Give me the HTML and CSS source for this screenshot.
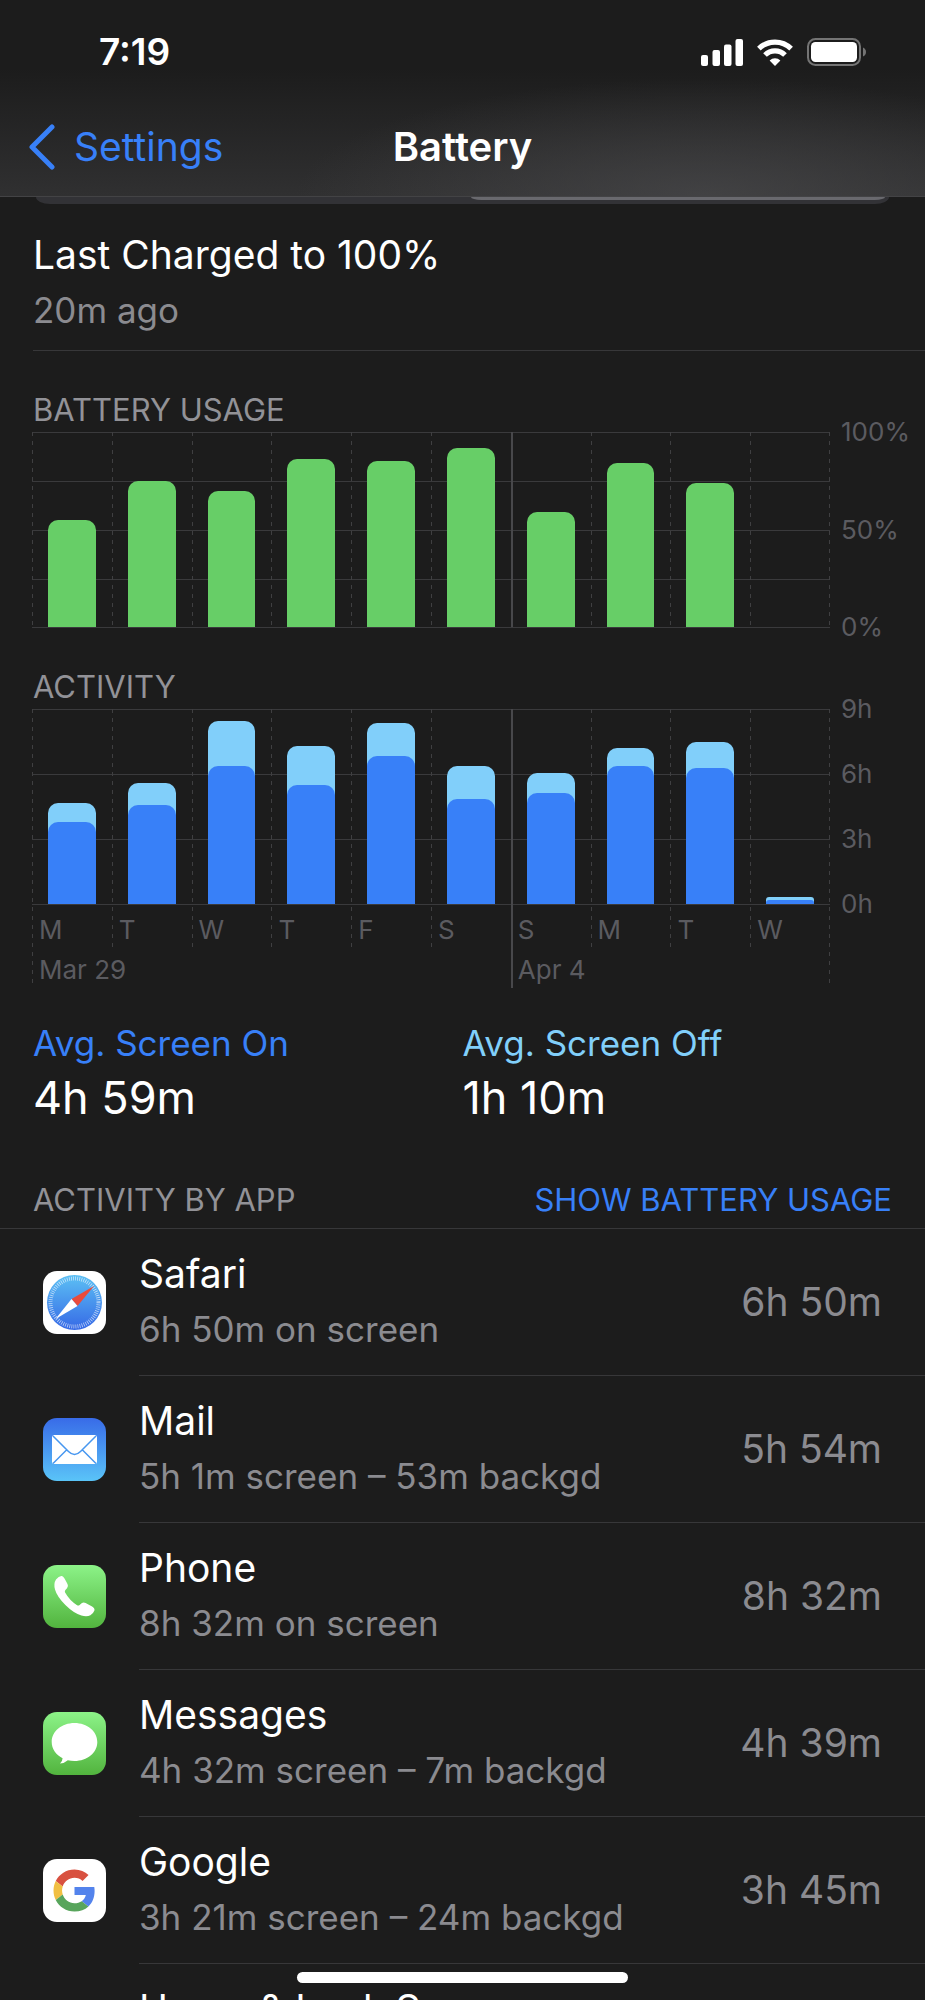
FILE: index.html
```html
<!DOCTYPE html>
<html lang="en">
<head>
<meta charset="utf-8">
<meta name="viewport" content="width=device-width, initial-scale=1">
<title>Battery</title>
<link rel="stylesheet" href="styles.css">
</head>
<body>
<div class="screen">
  <header class="header">
    <div class="status">
      <time class="clock">7:19</time>
      <div class="status-icons">
        <svg width="42" height="27" viewBox="0 0 42 27" fill="#fff"><rect y="16" width="7" height="11" rx="2"/><rect x="11.500" y="11" width="7.500" height="16" rx="2"/><rect x="23" y="5.500" width="7.500" height="21.500" rx="2"/><rect x="34.500" width="7.500" height="27" rx="2"/></svg>
        <svg width="36" height="27" viewBox="0 0 36 27" fill="none" stroke="#fff" stroke-width="5.200"><path d="M1.900 9.600a23 23 0 0 1 32.200 0"/><path d="M8 16a14.300 14.300 0 0 1 20 0"/><path d="M18 27l-5.400-5.500a7.800 7.800 0 0 1 10.800 0z" fill="#fff" stroke="none"/></svg>
        <svg width="59" height="28" viewBox="0 0 59 28"><rect x="1" y="1" width="52" height="26" rx="7.500" fill="none" stroke="#747474" stroke-width="2"/><rect x="4" y="4" width="46" height="20" rx="4.500" fill="#fff"/><path d="M56 9.500q3 1.500 3 4.500t-3 4.500z" fill="#747474"/></svg>
      </div>
    </div>
    <nav class="nav">
      <a class="back" href="#settings"><svg width="27" height="46" viewBox="0 0 27 46" fill="none" stroke="#3880f8" stroke-width="5" stroke-linecap="round" stroke-linejoin="round"><path d="M24 3L4 23l20 20"/></svg>Settings</a>
      <h1 class="title">Battery</h1>
    </nav>
  </header>

  <main class="content">
    <div class="segments"><span class="segment-active"></span></div>

    <section class="charged">
      <p class="primary">Last Charged to 100%</p>
      <p class="secondary">20m ago</p>
    </section>

    <section class="chart">
      <h2 class="caption">BATTERY USAGE</h2>
      <div class="chart-body">
        <div class="columns quarters">
          <div class="col"><div class="plot"><i class="bar green" style="height:55%"></i></div></div>
          <div class="col"><div class="plot"><i class="bar green" style="height:75%"></i></div></div>
          <div class="col"><div class="plot"><i class="bar green" style="height:70%"></i></div></div>
          <div class="col"><div class="plot"><i class="bar green" style="height:86%"></i></div></div>
          <div class="col"><div class="plot"><i class="bar green" style="height:85%"></i></div></div>
          <div class="col"><div class="plot"><i class="bar green" style="height:92%"></i></div></div>
          <div class="col week"><div class="plot"><i class="bar green" style="height:59%"></i></div></div>
          <div class="col"><div class="plot"><i class="bar green" style="height:84%"></i></div></div>
          <div class="col"><div class="plot"><i class="bar green" style="height:74%"></i></div></div>
          <div class="col last"><div class="plot"></div></div>
        </div>
        <div class="axis"><span>100%</span><span>50%</span><span>0%</span></div>
      </div>
    </section>

    <section class="chart">
      <h2 class="caption">ACTIVITY</h2>
      <div class="chart-body">
        <div class="columns thirds">
          <div class="col"><div class="plot"><i class="bar off" style="height:52%"></i><i class="bar on" style="height:42%"></i></div><span class="day">M</span></div>
          <div class="col"><div class="plot"><i class="bar off" style="height:62%"></i><i class="bar on" style="height:51%"></i></div><span class="day">T</span></div>
          <div class="col"><div class="plot"><i class="bar off" style="height:94%"></i><i class="bar on" style="height:71%"></i></div><span class="day">W</span></div>
          <div class="col"><div class="plot"><i class="bar off" style="height:81%"></i><i class="bar on" style="height:61%"></i></div><span class="day">T</span></div>
          <div class="col"><div class="plot"><i class="bar off" style="height:93%"></i><i class="bar on" style="height:76%"></i></div><span class="day">F</span></div>
          <div class="col"><div class="plot"><i class="bar off" style="height:71%"></i><i class="bar on" style="height:54%"></i></div><span class="day">S</span></div>
          <div class="col week"><div class="plot"><i class="bar off" style="height:67%"></i><i class="bar on" style="height:57%"></i></div><span class="day">S</span></div>
          <div class="col"><div class="plot"><i class="bar off" style="height:80%"></i><i class="bar on" style="height:71%"></i></div><span class="day">M</span></div>
          <div class="col"><div class="plot"><i class="bar off" style="height:83%"></i><i class="bar on" style="height:70%"></i></div><span class="day">T</span></div>
          <div class="col last"><div class="plot"><i class="bar off tiny" style="height:3.5%"></i><i class="bar on tiny" style="height:2%"></i></div><span class="day">W</span></div>
        </div>
        <div class="axis"><span>9h</span><span>6h</span><span>3h</span><span>0h</span></div>
      </div>
      <div class="weeks"><span class="week-start">Mar 29</span><span class="week-start week">Apr 4</span></div>
    </section>

    <section class="averages">
      <div><h2 class="avg-label on-text">Avg. Screen On</h2><p class="avg-value">4h 59m</p></div>
      <div><h2 class="avg-label off-text">Avg. Screen Off</h2><p class="avg-value">1h 10m</p></div>
    </section>

    <section>
      <div class="apps-head">
        <h2 class="caption">ACTIVITY BY APP</h2>
        <button class="toggle" type="button">SHOW BATTERY USAGE</button>
      </div>
      <ul class="apps">
        <li class="app">
          <svg class="icon" viewBox="0 0 63 63"><defs><linearGradient id="sf" x2="0" y2="1"><stop stop-color="#5cc0f4"/><stop offset="1" stop-color="#3669e6"/></linearGradient></defs><rect width="63" height="63" rx="14" fill="#fff"/><circle cx="31.500" cy="31.500" r="27.500" fill="url(#sf)"/><circle cx="31.500" cy="31.500" r="24" fill="none" stroke="#fff" stroke-opacity=".65" stroke-width="4" stroke-dasharray=".8 1.294"/><path d="M51 15L28.500 28l6 7z" fill="#ea4b3c"/><path d="M12.500 48l16-20 6 7z" fill="#fff"/></svg>
          <div class="info"><h3 class="primary">Safari</h3><p class="secondary">6h 50m on screen</p></div><span class="total">6h 50m</span>
        </li>
        <li class="app">
          <svg class="icon" viewBox="0 0 63 63"><defs><linearGradient id="ml" x2="0" y2="1"><stop stop-color="#386be8"/><stop offset="1" stop-color="#5ac4f8"/></linearGradient></defs><rect width="63" height="63" rx="14" fill="url(#ml)"/><rect x="9" y="17" width="45" height="29" rx="2.500" fill="#fff"/><path d="M10 18l15.500 15.500q6 6 12 0L53 18M10 45.500L23.500 32M53 45.500L39.500 32" fill="none" stroke="#4797f0" stroke-width="1.500"/></svg>
          <div class="info"><h3 class="primary">Mail</h3><p class="secondary">5h 1m screen – 53m backgd</p></div><span class="total">5h 54m</span>
        </li>
        <li class="app">
          <svg class="icon" viewBox="0 0 63 63"><defs><linearGradient id="gr" x2="0" y2="1"><stop stop-color="#8cf388"/><stop offset="1" stop-color="#52b43e"/></linearGradient></defs><rect width="63" height="63" rx="14" fill="url(#gr)"/><path d="M13 14.500q3-4 6-3.500 1.500.5 2.500 2.500l3 5.500q1.300 2.500-.5 4.300l-1.600 1.800q-1 1.200-.3 2.400 4.500 8 12 12.700 1.400.8 2.500-.2l2-1.700q1.800-1.500 4-.3l6.500 3.500q3 1.800 2.300 4-1 3-4 4.700-3.500 1.700-9 .3-8-2.500-16-10.500-8.500-8.500-10.400-15.500-1.600-6 1-10z" fill="#fff"/></svg>
          <div class="info"><h3 class="primary">Phone</h3><p class="secondary">8h 32m on screen</p></div><span class="total">8h 32m</span>
        </li>
        <li class="app">
          <svg class="icon" viewBox="0 0 63 63"><rect width="63" height="63" rx="14" fill="url(#gr)"/><path d="M31.500 11c12.700 0 22.800 8.300 22.800 19s-10.100 19-22.800 19q-3.500 0-6.700-.8-3.300 3-7.800 3.300 2.500-2.500 2.600-5.300C13 43 8.700 37 8.700 30c0-10.700 10.100-19 22.800-19z" fill="#fff"/></svg>
          <div class="info"><h3 class="primary">Messages</h3><p class="secondary">4h 32m screen – 7m backgd</p></div><span class="total">4h 39m</span>
        </li>
        <li class="app">
          <svg class="icon" viewBox="0 0 63 63"><rect width="63" height="63" rx="14" fill="#fff"/><g transform="translate(10.500 10.500) scale(.875)"><path fill="#d85140" d="M24 9.500c3.540 0 6.710 1.220 9.210 3.600l6.850-6.850C35.900 2.380 30.470 0 24 0 14.620 0 6.510 5.380 2.560 13.220l7.980 6.190C12.430 13.720 17.740 9.500 24 9.500z"/><path fill="#5383ec" d="M46.980 24.550c0-1.570-.15-3.090-.38-4.550H24v9.020h12.940c-.58 2.960-2.260 5.480-4.780 7.180l7.730 6c4.510-4.180 7.090-10.360 7.090-17.650z"/><path fill="#f1bf42" d="M10.530 28.590c-.48-1.450-.76-2.990-.76-4.590s.27-3.140.76-4.590l-7.980-6.190C.92 16.460 0 20.120 0 24c0 3.880.92 7.540 2.560 10.780l7.970-6.190z"/><path fill="#58a55c" d="M24 48c6.480 0 11.930-2.130 15.890-5.810l-7.730-6c-2.150 1.450-4.920 2.300-8.160 2.300-6.260 0-11.570-4.220-13.470-9.910l-7.980 6.190C6.510 42.620 14.620 48 24 48z"/></g></svg>
          <div class="info"><h3 class="primary">Google</h3><p class="secondary">3h 21m screen – 24m backgd</p></div><span class="total">3h 45m</span>
        </li>
        <li class="app"><span class="icon"></span><div class="info"><h3 class="primary">Home &amp; Lock Screen</h3></div></li>
      </ul>
    </section>
  </main>
  <div class="home-bar"></div>
</div>
</body>
</html>
```
FILE: styles.css
```css
* { box-sizing: border-box; }
body { margin: 0; background: #1c1c1c; color: #fff; font-family: Inter, "Liberation Sans", sans-serif; }
h1, h2, h3, p, ul { margin: 0; padding: 0; font-weight: 400; }
svg { display: block; flex: none; }

.screen { position: relative; height: 100vh; display: flex; flex-direction: column; }

.header {
  flex: none;
  border-bottom: 1px solid #434345;
  background:
    radial-gradient(ellipse 44% 60% at 76% 100%, rgba(72, 72, 74, .75), rgba(72, 72, 74, 0)),
    linear-gradient(#1c1c1c 35%, #303031);
}
.status { height: 104px; padding: 0 59px 0 99px; display: flex; align-items: center; justify-content: space-between; }
.clock { font-size: 37px; font-weight: 600; line-height: 44px; }
.status-icons { display: flex; align-items: center; gap: 14px; }
.nav { height: 92px; padding: 0 28px 6px; display: grid; grid-template-columns: 1fr auto 1fr; align-items: center; font-size: 39px; line-height: 48px; }
.back { display: flex; align-items: center; gap: 19px; color: #3880f8; text-decoration: none; }
.title { font-size: 40px; font-weight: 600; }

.content { flex: 1; min-height: 0; overflow-y: auto; scrollbar-width: none; }
.segments { height: 7px; margin: 0 36px; padding: 0 4px 4px; display: flex; justify-content: flex-end; background: #323236; border-radius: 0 0 14px 14px / 0 0 7px 7px; }
.segment-active { width: 49%; background: #69696e; border-radius: 0 0 10px 10px / 0 0 3px 3px; }

.primary { font-size: 39px; line-height: 56px; white-space: nowrap; }
.secondary { font-size: 35px; line-height: 54px; color: #8b8b90; white-space: nowrap; }
.charged { margin-left: 33px; padding: 23px 0 13px; border-bottom: 1px solid #373739; }

.caption { font-size: 31px; line-height: 40px; color: #929297; }
.chart { margin: 39px 0 0 32px; }
.chart .caption { padding-left: 1px; }
.chart-body { display: flex; gap: 11px; margin-top: 2px; }
.columns { flex: 1; display: grid; grid-template-columns: repeat(10, 1fr); background-repeat: no-repeat; }
.quarters { background-image: repeating-linear-gradient(#3a3a3c 0 1px, transparent 1px 49px); border-bottom: 1px solid #3a3a3c; }
.thirds { background-image: repeating-linear-gradient(#3a3a3c 0 1px, transparent 1px 65px); background-size: 100% 196px; }
.col { background: repeating-linear-gradient(#3f3f41 0 4px, transparent 4px 9px) left / 1px 100% no-repeat; }
.last {
  background:
    repeating-linear-gradient(#3f3f41 0 4px, transparent 4px 9px) left / 1px 100% no-repeat,
    repeating-linear-gradient(#3f3f41 0 4px, transparent 4px 9px) right / 1px 100% no-repeat;
}
.week { background: linear-gradient(#48484b, #48484b) left / 2px 100% no-repeat; }
.plot { height: 195px; display: grid; align-items: end; justify-items: center; }
.bar { grid-area: 1 / 1; width: 60%; border-radius: 10px 10px 0 0; }
.tiny { border-radius: 3px 3px 0 0; }
.green { background: #67ce67; }
.on { background: #3880f8; }
.off { background: #81cffa; }
.axis { width: 84px; height: 195px; display: flex; flex-direction: column; justify-content: space-between; font-size: 26px; line-height: 0; color: #5b5b60; }
.axis span { height: 0; }
.day { display: block; padding: 4px 0 0 7px; font-size: 26px; line-height: 44px; color: #5b5b60; }
.weeks { margin-right: 95px; display: grid; grid-template-columns: 6fr 4fr; background: repeating-linear-gradient(#3f3f41 0 4px, transparent 4px 9px) right / 1px 100% no-repeat; }
.week-start { padding-left: 7px; font-size: 26px; line-height: 36px; color: #5b5b60; }
.week-start:first-child { background: repeating-linear-gradient(#3f3f41 0 4px, transparent 4px 9px) left / 1px 100% no-repeat; }

.averages { margin: 28px 33px 0; display: grid; grid-template-columns: 1fr 1fr; }
.avg-label { font-size: 35px; line-height: 54px; }
.avg-value { font-size: 45px; line-height: 56px; }
.on-text { color: #3880f8; }
.off-text { color: #81cffa; }

.apps-head { margin-top: 54px; padding: 0 33px 8px; display: flex; justify-content: space-between; border-bottom: 1px solid #373739; }
.toggle { padding: 0; border: 0; background: none; color: #3880f8; font: inherit; font-size: 31px; line-height: 40px; }
.apps { list-style: none; }
.app { display: flex; align-items: center; gap: 33px; padding-left: 43px; }
.icon { width: 63px; height: 63px; flex: none; }
.info { flex: 1; height: 147px; padding: 17px 0 19px; border-bottom: 1px solid #373739; }
.total { align-self: stretch; margin-left: -33px; padding-right: 43px; border-bottom: 1px solid #373739; font-size: 39px; line-height: 146px; color: #8b8b90; }

.home-bar { position: absolute; left: 50%; bottom: 17px; width: 331px; height: 11px; margin-left: -166px; border-radius: 6px; background: #fff; }
```
